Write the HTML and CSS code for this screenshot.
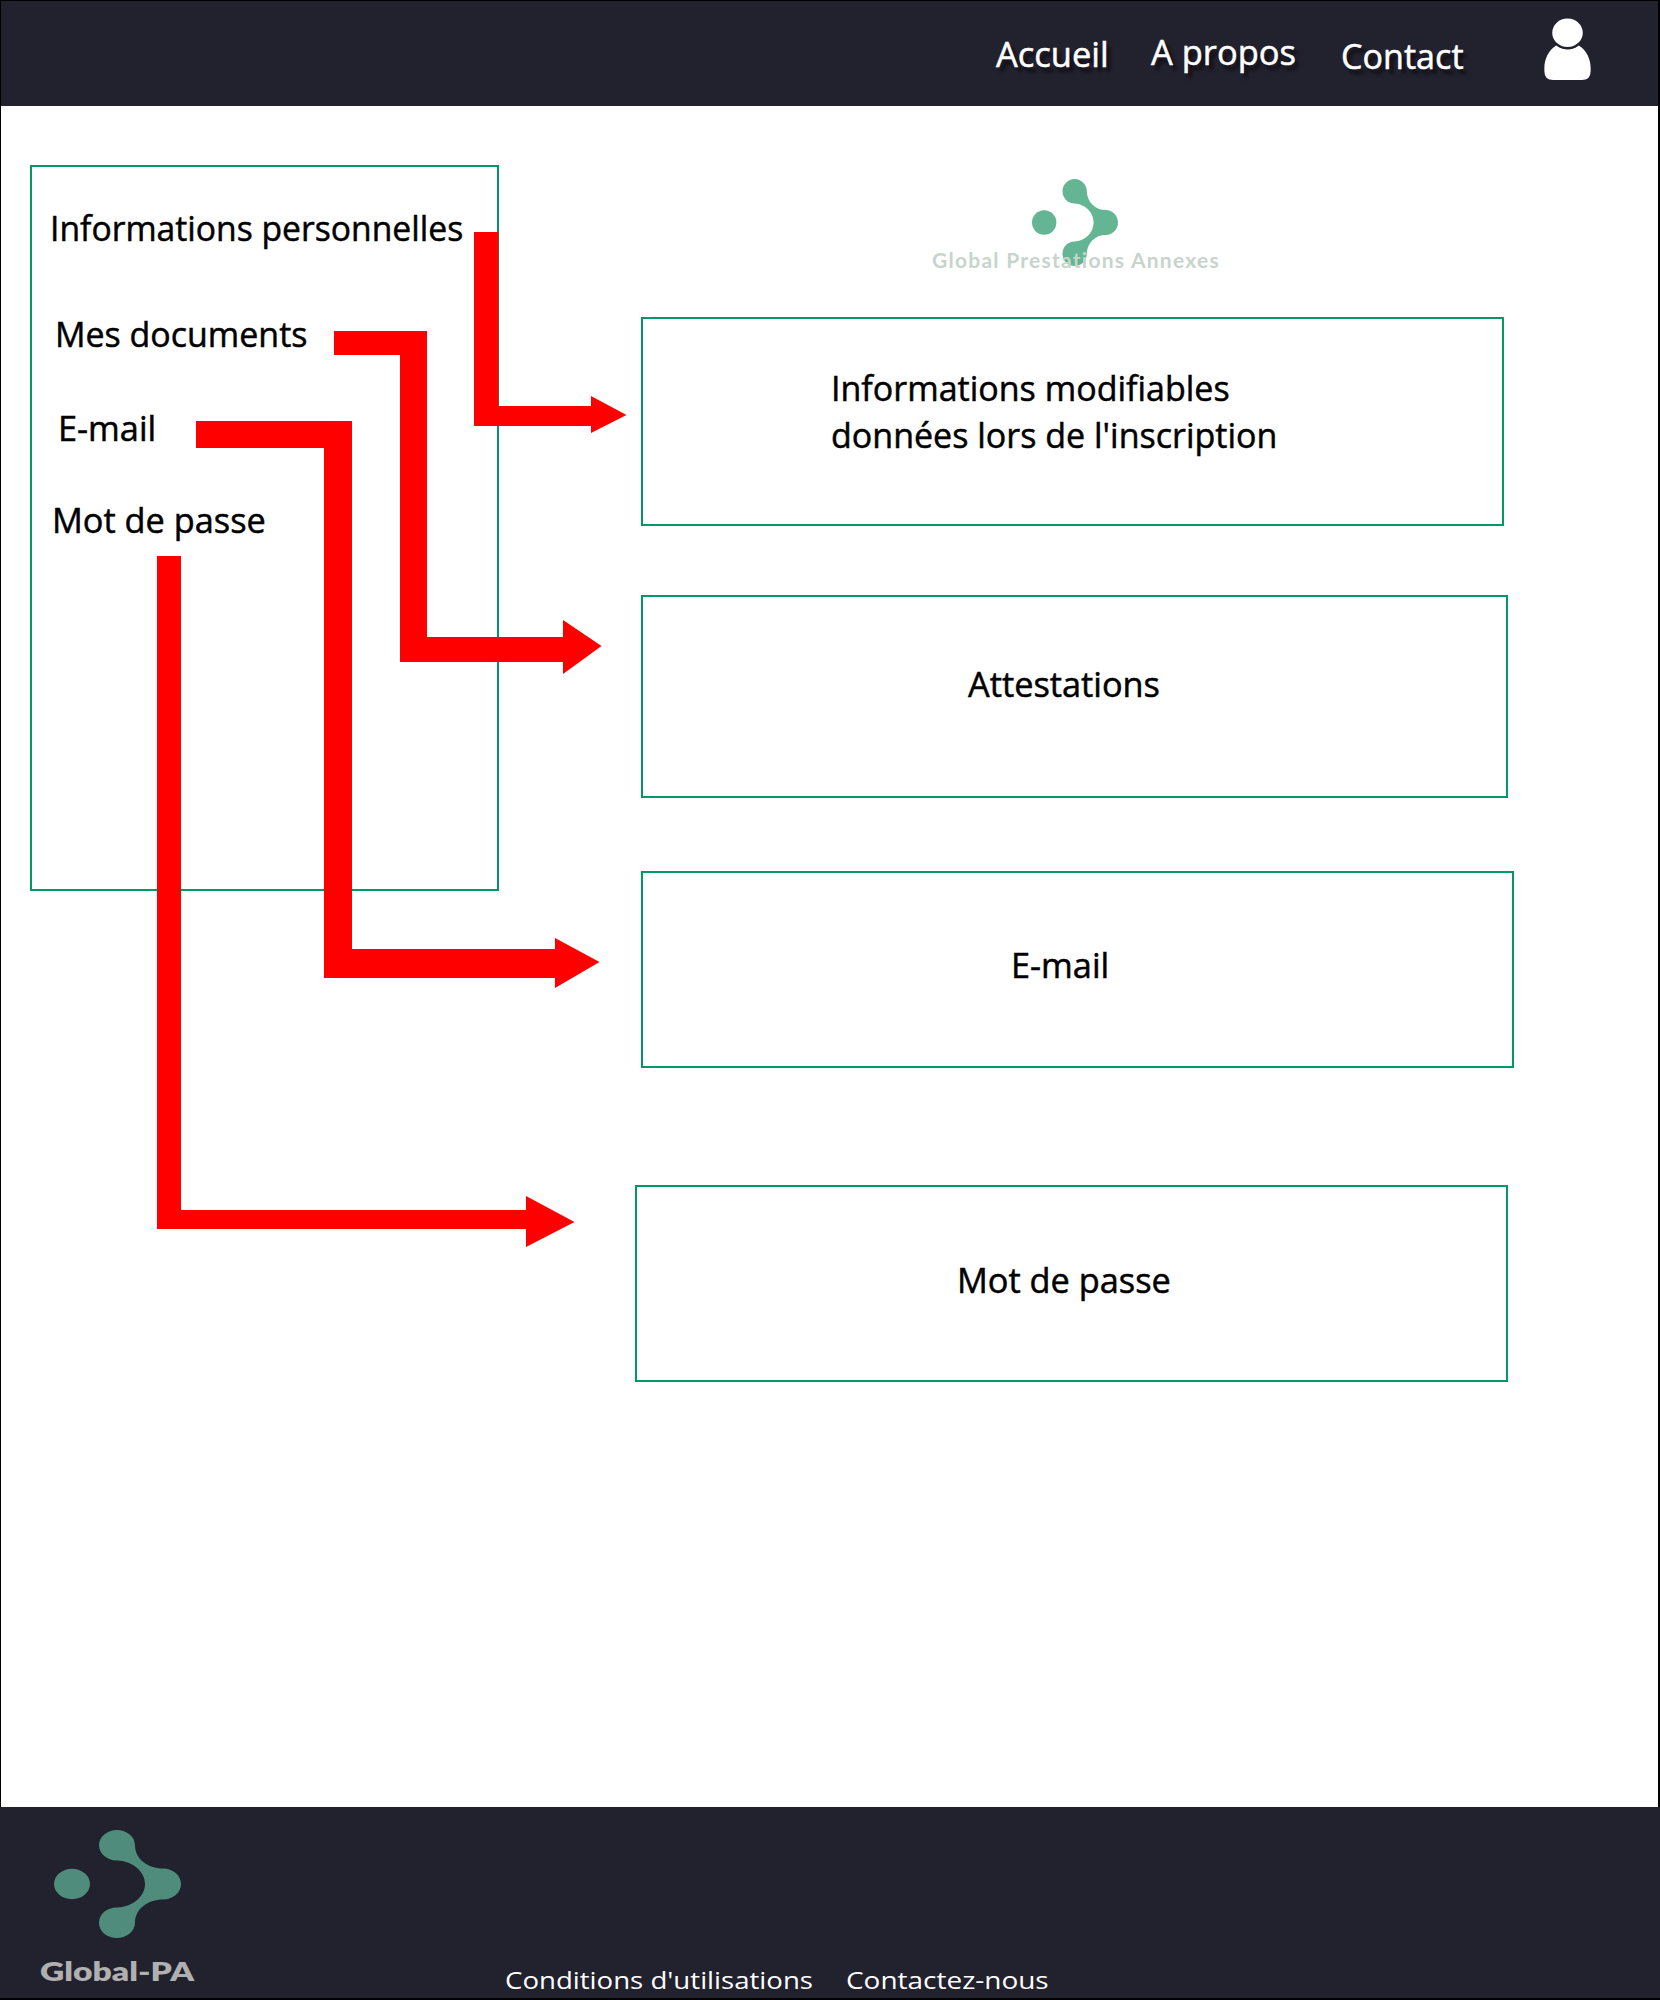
FILE: index.html
```html
<!DOCTYPE html>
<html lang="fr">
<head>
<meta charset="utf-8">
<title>Global Prestations Annexes</title>
<link rel="stylesheet" href="styles.css">
</head>
<body>
<div class="page">
  <header class="topbar">
    <nav class="nav">
      <a class="nav-home">Accueil</a>
      <a class="nav-about">A propos</a>
      <a class="nav-contact">Contact</a>
    </nav>
    <svg class="user" viewBox="0 0 48 64" width="48" height="63">
      <path d="M12 28C4 33 0 42 0 51V54Q0 63 9 63H38Q47 63 47 54V51C47 42 43 33 35 28Q24 36 12 28Z" fill="#fff"/>
      <ellipse cx="23.5" cy="15.500" rx="17" ry="16" fill="#22212e"/>
      <ellipse cx="23.5" cy="15" rx="15.500" ry="14.500" fill="#fff"/>
    </svg>
  </header>

  <main class="content">
    <aside class="sidebar">
      <a class="label side-info">Informations personnelles</a>
      <a class="label side-docs">Mes documents</a>
      <a class="label side-mail">E-mail</a>
      <a class="label side-pass">Mot de passe</a>
    </aside>
    <section class="panels">
      <div class="brand">
        <svg class="brand-mark" viewBox="0 0 127 108" preserveAspectRatio="none" width="86" height="87">
          <use href="#mark"/>
        </svg>
        <span class="brand-name">Global Prestations Annexes</span>
      </div>
      <div class="panel panel-info"><p class="label">Informations modifiables</p><p class="label">données lors de l'inscription</p></div>
      <div class="panel panel-docs"><p class="label">Attestations</p></div>
      <div class="panel panel-mail"><p class="label">E-mail</p></div>
      <div class="panel panel-pass"><p class="label">Mot de passe</p></div>
    </section>
  </main>

  <footer class="footer">
    <div class="footer-brand">
      <svg viewBox="0 0 127 108" preserveAspectRatio="none" width="127" height="108">
        <g id="mark">
          <ellipse cx="18" cy="54" rx="18" ry="15.200"/>
          <path d="M63 0C53 0 45 7 45 15.200S53 30.500 63 30.500C78 31 91 41 91 54S78 77 63 77.500C53 77.500 45 84 45 92.800S53 108 63 108S81 101 81 92.800C81 79 94 69.500 109 69.500C119 69.500 127 62.500 127 54S119 38.500 109 38.500C94 38.500 81 29 81 15.200C81 7 73 0 63 0Z"/>
        </g>
      </svg>
      <span class="footer-name">Global-PA</span>
    </div>
    <nav class="footer-links">
      <a class="link-terms">Conditions d'utilisations</a>
      <a class="link-contact">Contactez-nous</a>
    </nav>
  </footer>

  <svg class="arrows" viewBox="0 0 1660 2000" width="1660" height="2000">
    <path d="M474 232H498.500V406H591V396L626.500 415L591 433V426H474Z"/>
    <path d="M334 331H427V637H563V620L601.500 646L563 674V662H400V355H334Z"/>
    <path d="M196 421H352V949H555V938L599.500 962L555 988V978H324V448H196Z"/>
    <path d="M157 556H181V1210H526V1196L574.500 1222L526 1247V1229H157Z"/>
  </svg>
</div>
</body>
</html>
```
FILE: styles.css
```css
* { box-sizing: border-box; }

body {
  margin: 0;
  background: #fff;
  font-family: "Open Sans", "Noto Sans", sans-serif;
  color: #000;
}

.page {
  position: relative;
  display: flex;
  flex-direction: column;
  width: 1660px;
  height: 2000px;
  overflow: hidden;
  border-top: 1px solid #000;
  border-bottom: 2px solid #000;
}

.topbar {
  display: flex;
  height: 105px;
  padding-left: 995px;
  background: #22212e;
  border-left: 1px solid #000;
  border-right: 2px solid #000;
}

.nav {
  display: flex;
  width: 548px;
  color: #fff;
  font-size: 35px;
  line-height: 48px;
  text-shadow: 4px 5px 4px rgba(0, 0, 0, .65);
  -webkit-text-stroke: .5px #fff;
}

.nav a {
  flex: none;
  white-space: nowrap;
  transform: scaleX(.985);
  transform-origin: 0 0;
}

.nav-home { width: 155px; margin-top: 29px; }
.nav-about { width: 190px; margin-top: 27px; }
.nav a.nav-contact { margin-top: 31px; transform: scaleX(.975); }

.user { margin-top: 17px; }

.content {
  display: flex;
  height: 1701px;
  padding-left: 29px;
  border-left: 1px solid #000;
  border-right: 2px solid #000;
}

.label {
  display: block;
  margin: 0;
  font-size: 35px;
  font-weight: 500;
  line-height: 47px;
  white-space: nowrap;
  transform: scaleX(.98);
  transform-origin: 0 0;
  -webkit-text-stroke: .5px #000;
}

.sidebar {
  width: 469px;
  height: 726px;
  margin-top: 59px;
  padding: 37px 0 0 15px;
  border: 2px solid #096;
}

.side-info { margin-left: 3px; transform: scaleX(.962); }
.side-docs { margin: 59px 0 0 8px; transform: scaleX(.97); }
.side-mail { margin: 47px 0 0 11px; }
.side-pass { margin: 45px 0 0 5px; }

.panels {
  display: flex;
  flex-direction: column;
  width: 900px;
  margin-left: 136px;
  padding-left: 6px;
}

.brand {
  display: flex;
  flex-direction: column;
  height: 211px;
  padding: 73px 0 0 291px;
}

.brand-mark {
  margin-left: 100px;
  fill: #64b593;
}

.brand-name {
  margin-top: -20px;
  color: #c6d5cc;
  font: 700 21px/28px Lato, sans-serif;
  letter-spacing: 1.25px;
  white-space: nowrap;
}

.panel { border: 2px solid #096; }
.panel-info { width: 863px; height: 209px; padding: 45px 0 0 188px; }
.panel-info .label { transform: scaleX(.972); }
.panel-docs { width: 867px; height: 203px; margin-top: 69px; padding: 63px 0 0 325px; }
.panel-mail { width: 873px; height: 197px; margin-top: 73px; padding: 68px 0 0 368px; }
.panel-pass { width: 873px; height: 197px; margin: 117px 0 0 -6px; padding: 69px 0 0 320px; }

.footer {
  display: flex;
  height: 191px;
  background: #22212e;
}

.footer-brand {
  display: flex;
  flex-direction: column;
  width: 505px;
  padding: 23px 0 0 40px;
}

.footer-brand svg {
  margin-left: 14px;
  fill: #4f8c7b;
}

.footer-name {
  margin-top: 16px;
  color: #b0b0b0;
  font: 800 27px/34px Lato, sans-serif;
  white-space: nowrap;
  transform: scaleX(1.245);
  transform-origin: 0 0;
}

.footer-links {
  display: flex;
  padding-top: 156px;
  color: #fff;
  font-size: 24px;
  line-height: 34px;
}

.footer-links a {
  flex: none;
  white-space: nowrap;
  transform-origin: 0 0;
}

.link-terms { width: 341px; transform: scaleX(1.15); }
.link-contact { transform: scaleX(1.165); }

.arrows {
  position: absolute;
  top: -1px;
  left: 0;
  fill: red;
  pointer-events: none;
}
```
